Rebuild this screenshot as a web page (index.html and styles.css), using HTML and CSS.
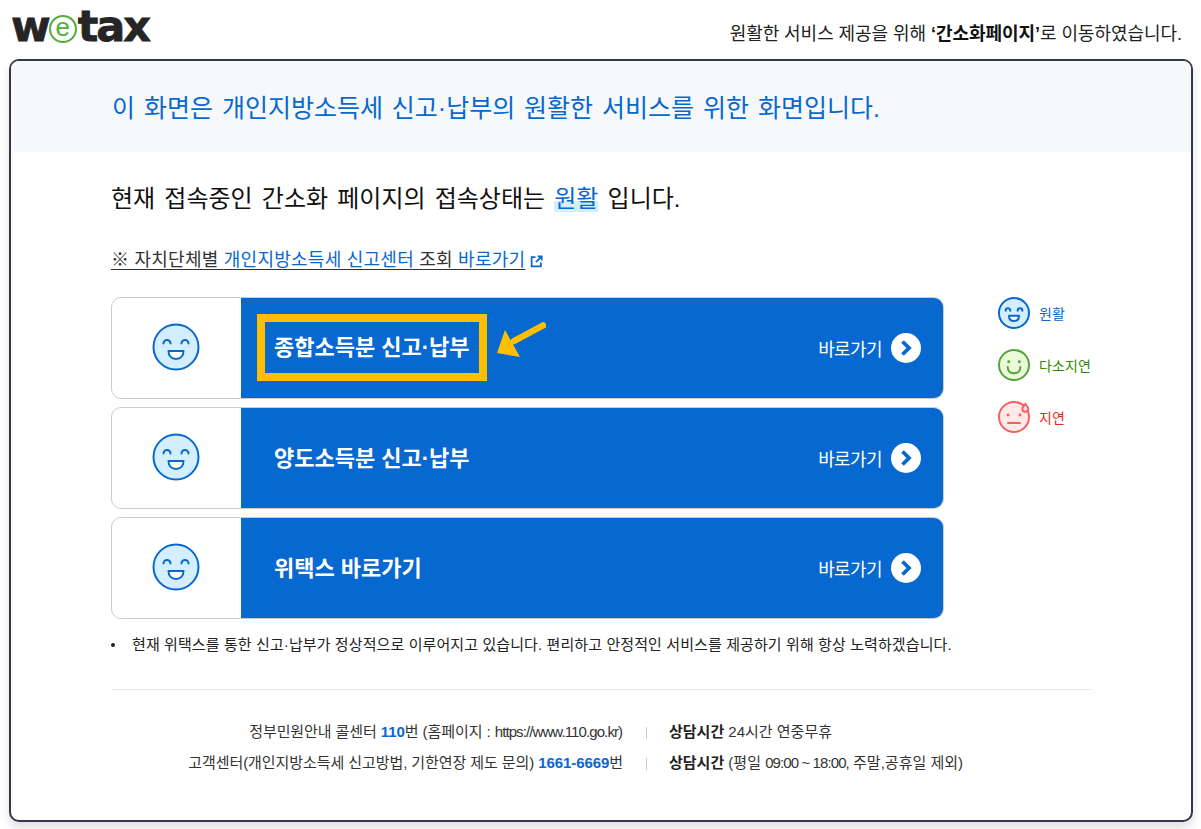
FILE: index.html
```html
<!DOCTYPE html>
<html lang="ko">
<head>
    <title>위택스 간소화페이지</title>
    <meta charset="UTF-8">
    <link rel="stylesheet" href="styles.css">
</head>
<body>
    <svg class="svg-defs" width="0" height="0">
        <symbol id="face-good" viewBox="0 0 48 48">
            <circle class="face-line" cx="24" cy="24" r="22.5" fill="#d3eeff" stroke="#0768d0"/>
            <path class="face-line" d="M11.500 20.500a3.500 3.500 0 0 1 7 0M29.500 20.500a3.500 3.500 0 0 1 7 0" fill="none" stroke="#0768d0" stroke-linecap="round"/>
            <path class="face-line" d="M16.500 28h15c0 5-3.200 8-7.500 8s-7.500-3-7.500-8z" fill="#fff" stroke="#0768d0" stroke-linejoin="round"/>
        </symbol>
        <symbol id="face-mid" viewBox="0 0 48 48">
            <circle class="face-line" cx="24" cy="24" r="22.500" fill="#ebfbd9" stroke="#55a33c"/>
            <circle cx="16" cy="19" r="2.200" fill="#55a33c"/>
            <circle cx="32" cy="19" r="2.200" fill="#55a33c"/>
            <path class="face-line" d="M14.500 27c0 6 4 9.500 9.500 9.500s9.500-3.500 9.500-9.500" fill="none" stroke="#55a33c" stroke-linecap="round"/>
        </symbol>
        <symbol id="face-bad" viewBox="0 0 48 48">
            <circle class="face-line" cx="24" cy="24" r="22.500" fill="#ffe9e9" stroke="#f76060"/>
            <circle cx="15" cy="21" r="2.200" fill="#f76060"/>
            <circle cx="33" cy="21" r="2.200" fill="#f76060"/>
            <path class="face-line" d="M15 33h18" stroke="#f76060" stroke-linecap="round"/>
            <path class="face-line" d="M41 4.500c2.500 3 4.500 4.800 4.500 7a4.500 4.500 0 0 1-9 0c0-2.200 2-4 4.500-7z" fill="#ffe9e9" stroke="#f76060"/>
        </symbol>
    </svg>

    <header class="top">
        <div class="logo">w<span class="logo-e">e</span>tax</div>
        <p class="top-msg">원활한 서비스 제공을 위해 <b>‘간소화페이지’</b>로 이동하였습니다.</p>
    </header>

    <main class="card">
        <h1 class="card-title">이 화면은 개인지방소득세 신고·납부의 원활한 서비스를 위한 화면입니다.</h1>

        <div class="card-body">
            <p class="state">현재 접속중인 간소화 페이지의 접속상태는 <span class="state-mark">원활</span> 입니다.</p>

            <div class="center-line">
                <a class="center-link" href="#">※ 자치단체별 <span class="blue">개인지방소득세 신고센터</span> 조회 <span class="blue">바로가기</span></a>
                <svg class="ext-icon" viewBox="0 0 12 12" width="13" height="13"><path d="M5 2H1.500v8.500H10V7M7 1.200h3.800V5M10.500 1.500 5.500 6.500" fill="none" stroke="#0768d0" stroke-width="1.600"/></svg>
            </div>

            <div class="status-wrap">
                <div class="menu">
                    <a class="menu-row" href="#">
                        <span class="menu-face"><svg width="48" height="48"><use href="#face-good"/></svg></span>
                        <span class="menu-main">
                            <span class="menu-name menu-name-on">종합소득분 신고·납부</span>
                            <svg class="arrow" viewBox="0 0 50 40" width="50" height="40"><path d="M47 4.500 18 20" fill="none" stroke="#ffbf00" stroke-width="6.500" stroke-linecap="round"/><path d="M9 9 1 32l23 4z" fill="#ffbf00"/></svg>
                            <span class="menu-go">바로가기
                                <svg viewBox="0 0 30 30" width="30" height="30"><circle cx="15" cy="15" r="15" fill="#fff"/><path d="M11.500 8.500 18 15l-6.500 6.500" fill="none" stroke="#0768d0" stroke-width="3.800"/></svg>
                            </span>
                        </span>
                    </a>
                    <a class="menu-row" href="#">
                        <span class="menu-face"><svg width="48" height="48"><use href="#face-good"/></svg></span>
                        <span class="menu-main">
                            <span class="menu-name">양도소득분 신고·납부</span>
                            <span class="menu-go">바로가기
                                <svg viewBox="0 0 30 30" width="30" height="30"><circle cx="15" cy="15" r="15" fill="#fff"/><path d="M11.500 8.500 18 15l-6.500 6.500" fill="none" stroke="#0768d0" stroke-width="3.800"/></svg>
                            </span>
                        </span>
                    </a>
                    <a class="menu-row" href="#">
                        <span class="menu-face"><svg width="48" height="48"><use href="#face-good"/></svg></span>
                        <span class="menu-main">
                            <span class="menu-name">위택스 바로가기</span>
                            <span class="menu-go">바로가기
                                <svg viewBox="0 0 30 30" width="30" height="30"><circle cx="15" cy="15" r="15" fill="#fff"/><path d="M11.500 8.500 18 15l-6.500 6.500" fill="none" stroke="#0768d0" stroke-width="3.800"/></svg>
                            </span>
                        </span>
                    </a>
                </div>

                <ul class="legend">
                    <li class="legend-good"><svg width="32" height="32"><use href="#face-good"/></svg>원활</li>
                    <li class="legend-mid"><svg width="32" height="32"><use href="#face-mid"/></svg>다소지연</li>
                    <li class="legend-bad"><svg width="32" height="32"><use href="#face-bad"/></svg>지연</li>
                </ul>
            </div>

            <ul class="notice">
                <li>현재 위택스를 통한 신고·납부가 정상적으로 이루어지고 있습니다. 편리하고 안정적인 서비스를 제공하기 위해 항상 노력하겠습니다.</li>
            </ul>

            <div class="contact">
                <div class="contact-row">
                    <span class="contact-left">정부민원안내 콜센터 <b class="blue">110</b>번 (홈페이지 : <span class="tight">https://www.110.go.kr</span>)</span>
                    <span class="contact-right"><b>상담시간</b> 24시간 연중무휴</span>
                </div>
                <div class="contact-row">
                    <span class="contact-left">고객센터(개인지방소득세 신고방법, 기한연장 제도 문의) <b class="blue">1661-6669</b>번</span>
                    <span class="contact-right"><b>상담시간</b> (평일 <span class="tight">09:00 ~ 18:00,</span> 주말,공휴일 제외)</span>
                </div>
            </div>
        </div>
    </main>
</body>
</html>
```

FILE: styles.css
```css
html, body {
    height: 100%;
}
body {
    margin: 0;
    height: 829px;
    overflow: hidden;
    background-color: #fff;
    font-family: "Liberation Sans", "Noto Sans CJK KR", sans-serif;
    color: #222;
}
p, h1, ul {
    margin: 0;
    padding: 0;
}
a {
    color: inherit;
    text-decoration: none;
}
.blue {
    color: #0768d0;
}
.svg-defs {
    display: block;
    height: 0;
}
.face-line {
    stroke-width: var(--face-stroke, 2);
}

.top {
    height: 59px;
    display: flex;
    justify-content: space-between;
    padding: 0 19px 0 11px;
}
.logo {
    font-family: "DejaVu Sans", sans-serif;
    font-weight: 700;
    font-size: 43px;
    line-height: 50px;
    height: 50px;
    margin-top: 1px;
    letter-spacing: -2px;
    -webkit-text-stroke: 0.800px #252525;
    color: #252525;
    display: flex;
}
.logo-e {
    width: 28px;
    height: 28px;
    margin: 14px 1px 0 0;
    border: 2px solid #55ae3c;
    border-radius: 50%;
    box-sizing: border-box;
    font-family: "Liberation Sans", sans-serif;
    font-weight: 400;
    font-size: 26px;
    line-height: 21px;
    text-align: center;
    letter-spacing: 0;
    -webkit-text-stroke: 0;
    color: #55ae3c;
}
.top-msg {
    font-size: 18px;
    line-height: 26px;
    margin-top: 21px;
    letter-spacing: -0.050px;
    color: #222;
}
.top-msg b {
    color: #111;
}

.card {
    margin: 0 8px 0 9px;
    height: 763px;
    box-sizing: border-box;
    border: 2px solid #34364a;
    border-radius: 10px;
    box-shadow: 0 6px 10px rgba(0,0,0,0.12);
    background-color: #fff;
    overflow: hidden;
}
.card-title {
    height: 91px;
    padding-left: 101px;
    background-color: #f7f8fa;
    font-weight: 400;
    font-size: 25px;
    line-height: 94px;
    word-spacing: 2px;
    color: #0768d0;
}
.card-body {
    padding: 0 100px;
}
.state {
    margin-top: 30px;
    font-size: 24px;
    line-height: 34px;
    word-spacing: 2.500px;
    color: #111;
}
.state-mark {
    color: #0768d0;
    background: linear-gradient(transparent 60%, #d3eeff 60%);
}
.center-line {
    display: flex;
    align-items: center;
    gap: 5px;
    margin-top: 31px;
    height: 26px;
}
.center-link {
    font-size: 18px;
    line-height: 26px;
    letter-spacing: 0.250px;
    text-decoration: underline;
    text-underline-offset: 3px;
    color: #333;
}
.ext-icon {
    margin-top: 2px;
}

.status-wrap {
    display: flex;
    margin-top: 24px;
}
.menu {
    width: 833px;
    flex-shrink: 0;
    display: flex;
    flex-direction: column;
    gap: 8px;
}
.menu-row {
    display: flex;
    height: 102px;
    box-sizing: border-box;
    border: 1px solid #ccc;
    border-radius: 10px;
    overflow: hidden;
    background-color: #fff;
}
.menu-face {
    width: 129px;
    display: flex;
    align-items: center;
    justify-content: center;
    padding: 0 2px 2px 0;
    box-sizing: border-box;
}
.menu-main {
    flex: 1;
    position: relative;
    display: flex;
    align-items: center;
    justify-content: space-between;
    padding: 0 22px 0 16px;
    background-color: #0768d0;
    color: #fff;
}
.menu-name {
    font-size: 22px;
    font-weight: 700;
    line-height: 31px;
    padding: 10px 9px;
    border: 8px solid transparent;
}
.menu-name-on {
    margin-bottom: 1px;
    border-color: #ffbf00;
}
.arrow {
    position: absolute;
    left: 255px;
    top: 23px;
}
.menu-go {
    display: flex;
    align-items: center;
    gap: 9px;
    font-size: 18px;
    letter-spacing: -0.600px;
}

.legend {
    list-style: none;
    margin-left: 54px;
    flex-shrink: 0;
    --face-stroke: 3;
}
.legend li {
    display: flex;
    align-items: center;
    gap: 9px;
    height: 32px;
    margin-bottom: 20px;
    font-size: 14px;
    letter-spacing: 0.100px;
    white-space: nowrap;
}
.legend-good {
    color: #0768d0;
}
.legend-mid {
    color: #2f8a00;
}
.legend-bad {
    color: #e8281c;
}

.notice {
    list-style: none;
    margin-top: 16px;
    font-size: 15px;
    line-height: 20px;
    letter-spacing: 0.100px;
    color: #222;
}
.notice li {
    display: flex;
    align-items: center;
    white-space: nowrap;
}
.notice li::before {
    content: "";
    width: 4px;
    height: 4px;
    margin: 0 17px 0 0;
    border-radius: 50%;
    background-color: #222;
}
.contact {
    margin-top: 34px;
    padding-top: 26px;
    border-top: 1px solid #e8e8e8;
    width: 980px;
    font-size: 15px;
    color: #333;
}
.contact-row {
    display: flex;
    height: 31px;
    line-height: 31px;
    align-items: center;
}
.contact-left {
    width: 536px;
    padding-right: 24px;
    box-sizing: border-box;
    text-align: right;
    white-space: nowrap;
    position: relative;
    letter-spacing: -0.080px;
}
.contact-left::after {
    content: "";
    position: absolute;
    right: 0;
    top: 11px;
    height: 12px;
    border-right: 1px solid #ccc;
}
.contact-right {
    padding-left: 22px;
    white-space: nowrap;
}
.contact .tight {
    letter-spacing: -0.900px;
}
.contact b {
    font-weight: 700;
}
.contact-right b {
    color: #222;
}
```
